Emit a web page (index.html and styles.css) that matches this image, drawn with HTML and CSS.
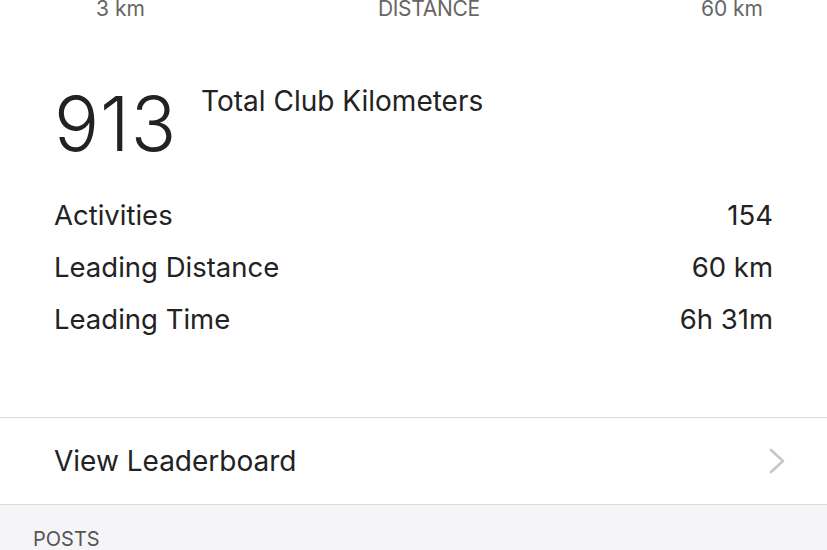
FILE: index.html
```html
<!DOCTYPE html>
<html lang="en">
<head>
    <meta charset="UTF-8">
    <meta name="viewport" content="width=device-width, initial-scale=1.0">
    <title>Club Stats</title>
    <link rel="stylesheet" href="styles.css">
</head>
<body>
    <section class="card">
        <div class="range">
            <span>3 km</span>
            <span class="range-label">DISTANCE</span>
            <span>60 km</span>
        </div>

        <div class="total">
            <span class="total-value">913</span>
            <span class="total-label">Total Club Kilometers</span>
        </div>

        <ul class="stats">
            <li><span>Activities</span><span>154</span></li>
            <li><span>Leading Distance</span><span>60 km</span></li>
            <li><span>Leading Time</span><span>6h 31m</span></li>
        </ul>
    </section>

    <a class="row-link" href="#">
        <span>View Leaderboard</span>
        <svg class="chevron" width="16" height="26" viewBox="0 0 16 26" fill="none" stroke="currentColor" stroke-width="2.6" stroke-linecap="round" stroke-linejoin="round">
            <path d="M2 2l12 11L2 24"></path>
        </svg>
    </a>

    <section class="posts">
        <h2>POSTS</h2>
    </section>
</body>
</html>
```

FILE: styles.css
```css
* {
    margin: 0;
    padding: 0;
    box-sizing: border-box;
}

body {
    font-family: 'Inter', 'Roboto', sans-serif;
    color: #222;
    background: #f5f5f8;
    overflow: hidden;
}

.card {
    background: #fff;
    padding: 0 54px 0 54px;
    height: 420px;
    border-bottom: 1px solid #dcdcdf;
}

.range {
    display: flex;
    justify-content: space-between;
    font-size: 21px;
    line-height: 21px;
    color: #666;
    margin-top: -2px;
    padding: 0 10px 0 42px;
}

.range-label {
    margin-left: 12px;
    letter-spacing: -0.3px;
}

.total {
    display: flex;
    align-items: flex-start;
    gap: 24px;
    margin-top: 67px;
}

.total-value {
    font-size: 75px;
    font-weight: 300;
    line-height: 75px;
    letter-spacing: 1px;
}

.total-label {
    font-size: 28px;
    line-height: 28px;
    margin-top: 1px;
}

.stats {
    list-style: none;
    margin-top: 28px;
}

.stats li {
    display: flex;
    justify-content: space-between;
    font-size: 27.5px;
    line-height: 52px;
}

.row-link {
    display: flex;
    align-items: center;
    justify-content: space-between;
    height: 87px;
    padding: 0 42px 0 54px;
    background: #fff;
    border-bottom: 1px solid #dcdcdf;
    color: #222;
    text-decoration: none;
    font-size: 28px;
}

.chevron {
    color: #c6c6cb;
}

.posts {
    padding: 22px 33px;
}

.posts h2 {
    font-size: 20px;
    font-weight: 400;
    color: #555;
}
```
